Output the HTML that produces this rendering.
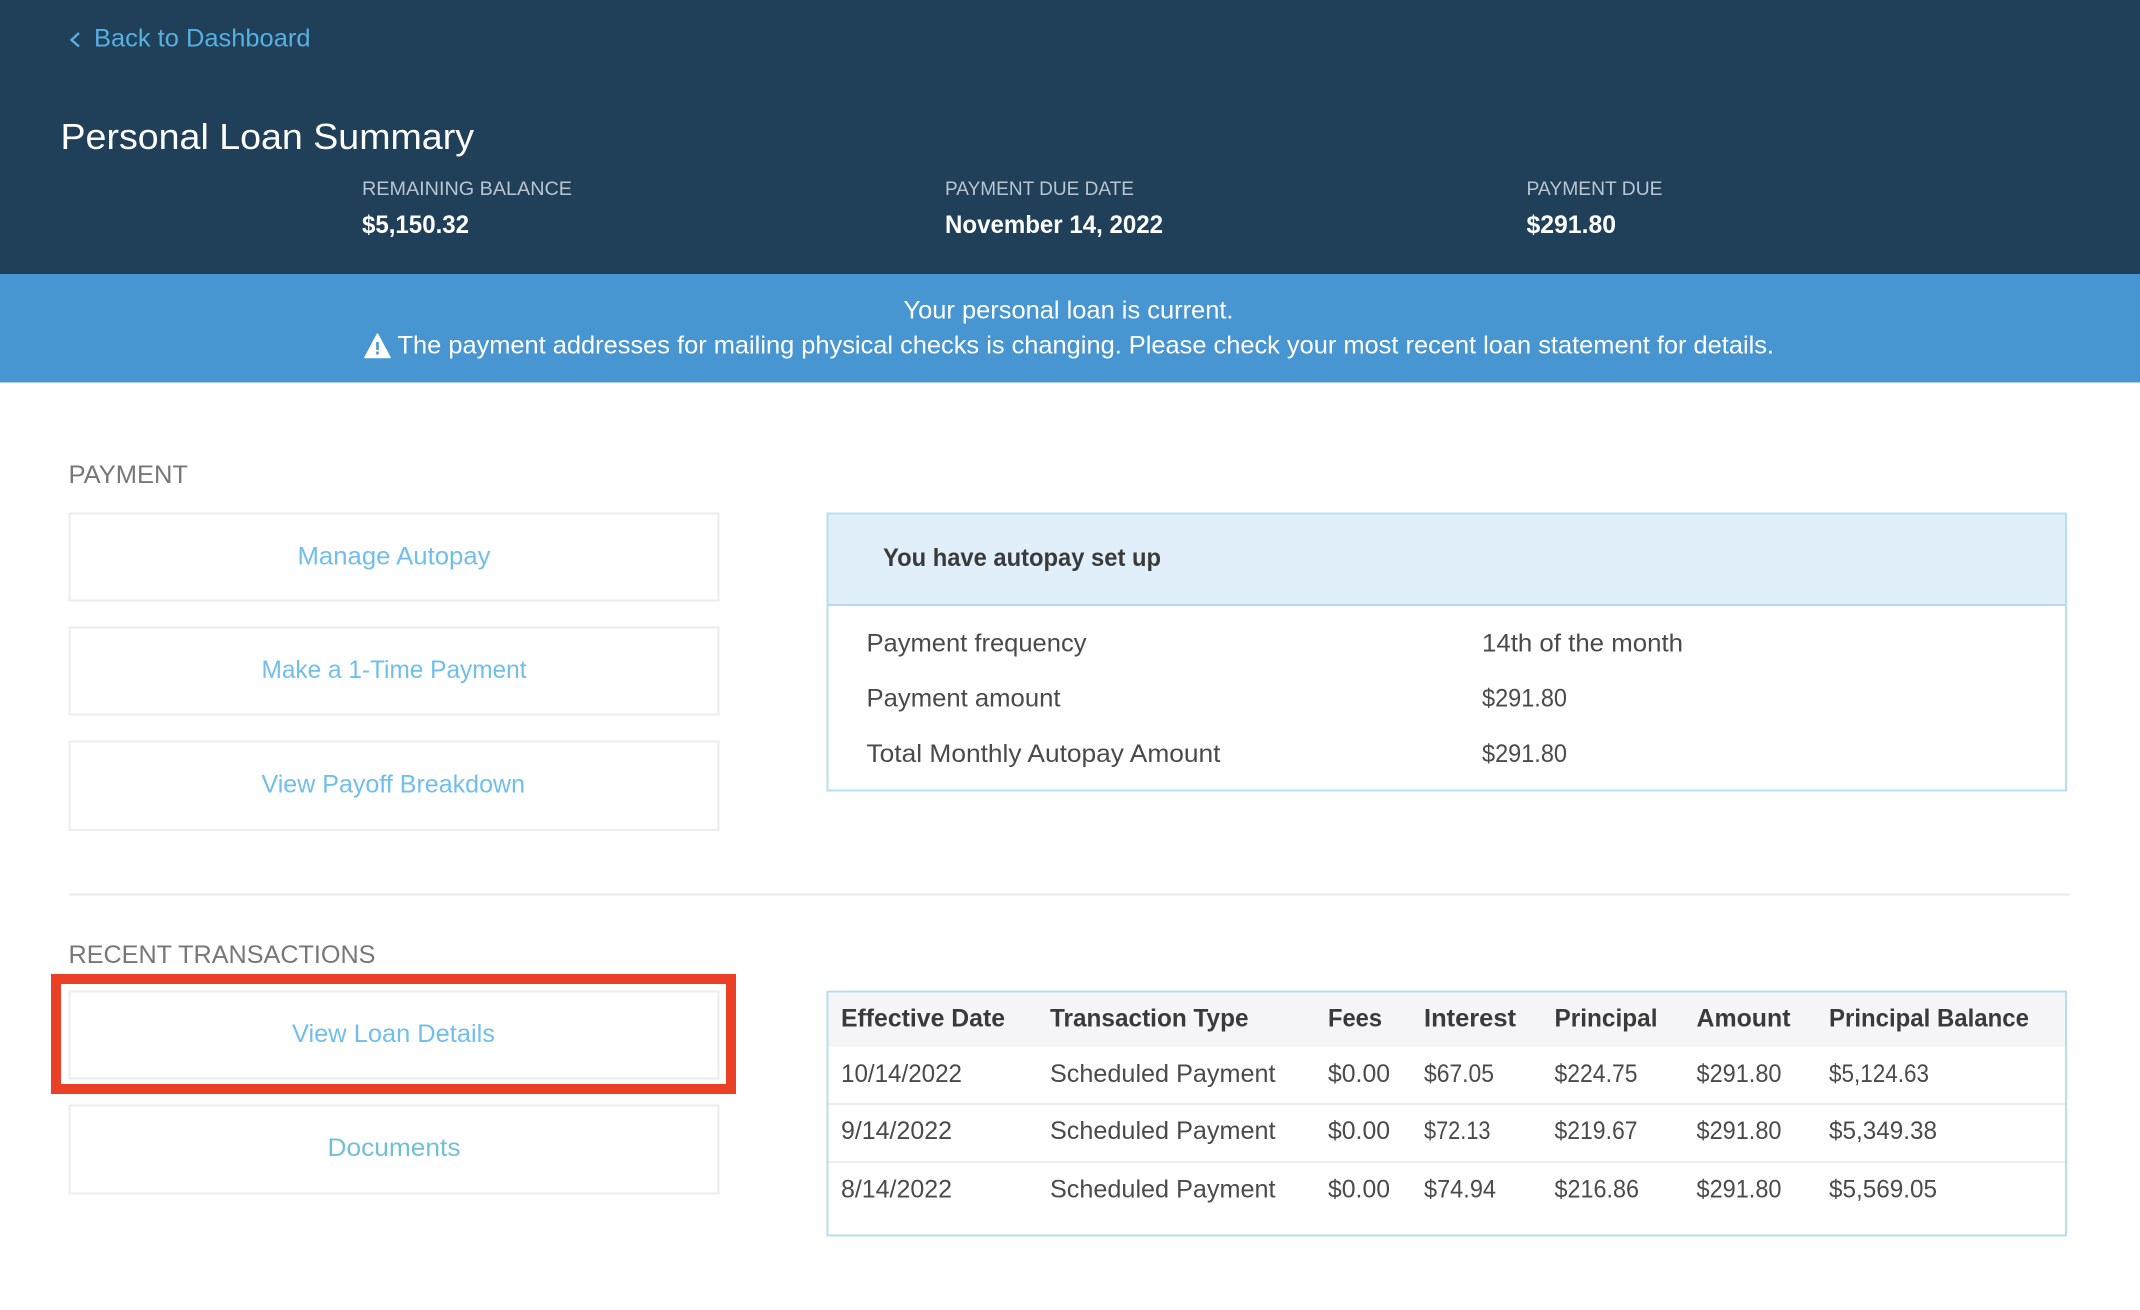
<!DOCTYPE html>
<html><head><meta charset="utf-8"><title>Personal Loan Summary</title>
<style>
html,body{margin:0;padding:0;background:#fff;width:2140px;height:1310px;overflow:hidden}
svg{display:block}
text{font-family:"Liberation Sans",sans-serif;font-size:25px;fill:#4a4a4a}
.b{font-weight:700}
.h{fill:#3a3a3a;font-weight:700}
.l{fill:#6fbfea}
.s{fill:#777}
.w{fill:#fff}
.g{fill:#b9c5cf;font-size:19.5px}
</style></head><body>
<svg width="2140" height="1310" viewBox="0 0 2140 1310" xmlns="http://www.w3.org/2000/svg">
<rect width="2140" height="1310" fill="#fff"/>
<rect width="2140" height="274" fill="#203f58"/>
<rect y="274" width="2140" height="109" fill="#4795d1"/>
<rect y="382" width="2140" height="1" fill="#a9cfea"/>

<path d="M79 33L71.500 40L79 46.500" fill="none" stroke="#56b0e0" stroke-width="2.400"/>
<text x="94" y="46.500" class="l" style="fill:#56b0e0" textLength="216.500" lengthAdjust="spacingAndGlyphs">Back to Dashboard</text>
<text x="60.500" y="149" class="w" style="font-size:36px" textLength="413.500" lengthAdjust="spacingAndGlyphs">Personal Loan Summary</text>

<text x="362" y="195" class="g" textLength="210" lengthAdjust="spacingAndGlyphs">REMAINING BALANCE</text>
<text x="362" y="233" class="w b" textLength="107" lengthAdjust="spacingAndGlyphs">$5,150.32</text>
<text x="945" y="195" class="g" textLength="189" lengthAdjust="spacingAndGlyphs">PAYMENT DUE DATE</text>
<text x="945" y="233" class="w b" textLength="218" lengthAdjust="spacingAndGlyphs">November 14, 2022</text>
<text x="1526.500" y="195" class="g" textLength="136" lengthAdjust="spacingAndGlyphs">PAYMENT DUE</text>
<text x="1526.500" y="233" class="w b" textLength="89.500" lengthAdjust="spacingAndGlyphs">$291.80</text>

<text x="903.500" y="318.500" class="w" textLength="330" lengthAdjust="spacingAndGlyphs">Your personal loan is current.</text>
<path d="M377.500 334L390 357.500H365Z" fill="#fff" stroke="#fff" stroke-width="1.500" stroke-linejoin="round"/>
<rect x="376.200" y="342" width="2.600" height="8" fill="#4795d1"/>
<rect x="376.200" y="351.500" width="2.600" height="3" fill="#4795d1"/>
<text x="397.500" y="353.500" class="w" textLength="1376.500" lengthAdjust="spacingAndGlyphs">The payment addresses for mailing physical checks is changing. Please check your most recent loan statement for details.</text>

<text x="68.500" y="483" class="s" textLength="119.500" lengthAdjust="spacingAndGlyphs">PAYMENT</text>
<g fill="#fff" stroke="#ececec" stroke-width="2">
<rect x="69.500" y="513.500" width="649" height="87"/>
<rect x="69.500" y="627.500" width="649" height="87"/>
<rect x="69.500" y="741.500" width="649" height="88.500"/>
<rect x="69.500" y="991.500" width="649" height="87"/>
<rect x="69.500" y="1105.500" width="649" height="88"/>
</g>
<text x="297.500" y="564.500" class="l" textLength="193" lengthAdjust="spacingAndGlyphs">Manage Autopay</text>
<text x="261.500" y="678" class="l" textLength="265" lengthAdjust="spacingAndGlyphs">Make a 1-Time Payment</text>
<text x="261.500" y="792.500" class="l" textLength="263.500" lengthAdjust="spacingAndGlyphs">View Payoff Breakdown</text>

<rect x="69" y="893.500" width="2001" height="2" fill="#e9e9e9"/>
<text x="68.500" y="963" class="s" textLength="307" lengthAdjust="spacingAndGlyphs">RECENT TRANSACTIONS</text>
<rect x="56" y="979" width="675" height="110" fill="none" stroke="#ea4026" stroke-width="10"/>
<text x="292" y="1042" class="l" textLength="203" lengthAdjust="spacingAndGlyphs">View Loan Details</text>
<text x="327.500" y="1156" class="l" style="fill:#72c0d8" textLength="133" lengthAdjust="spacingAndGlyphs">Documents</text>

<rect x="827.500" y="513.500" width="1238.500" height="92" fill="#e1effb"/>
<rect x="827.500" y="513.500" width="1238.500" height="277" fill="none" stroke="#b5dfee" stroke-width="2"/>
<rect x="827.500" y="604" width="1238.500" height="2" fill="#b5dcee"/>
<text x="883" y="566" class="h" textLength="278" lengthAdjust="spacingAndGlyphs">You have autopay set up</text>
<text x="866.500" y="651.500" textLength="220" lengthAdjust="spacingAndGlyphs">Payment frequency</text>
<text x="1482" y="651.500" textLength="201" lengthAdjust="spacingAndGlyphs">14th of the month</text>
<text x="866.500" y="706.500" textLength="194" lengthAdjust="spacingAndGlyphs">Payment amount</text>
<text x="1482" y="706.500" textLength="85" lengthAdjust="spacingAndGlyphs">$291.80</text>
<text x="866.500" y="762" textLength="354" lengthAdjust="spacingAndGlyphs">Total Monthly Autopay Amount</text>
<text x="1482" y="762" textLength="85" lengthAdjust="spacingAndGlyphs">$291.80</text>

<rect x="827.500" y="991.500" width="1238.500" height="55.500" fill="#f5f5f8"/>
<rect x="827.500" y="1103" width="1238.500" height="2" fill="#ececec"/>
<rect x="827.500" y="1161" width="1238.500" height="2" fill="#ececec"/>
<rect x="827.500" y="991.500" width="1238.500" height="244" fill="none" stroke="#b5dfee" stroke-width="2"/>

<text x="841" y="1026.500" class="h" textLength="164" lengthAdjust="spacingAndGlyphs">Effective Date</text>
<text x="1050" y="1026.500" class="h" textLength="198.500" lengthAdjust="spacingAndGlyphs">Transaction Type</text>
<text x="1328" y="1026.500" class="h" textLength="54" lengthAdjust="spacingAndGlyphs">Fees</text>
<text x="1424" y="1026.500" class="h" textLength="92" lengthAdjust="spacingAndGlyphs">Interest</text>
<text x="1554.500" y="1026.500" class="h" textLength="103" lengthAdjust="spacingAndGlyphs">Principal</text>
<text x="1696.500" y="1026.500" class="h" textLength="94" lengthAdjust="spacingAndGlyphs">Amount</text>
<text x="1829" y="1026.500" class="h" textLength="200" lengthAdjust="spacingAndGlyphs">Principal Balance</text>

<text x="841" y="1082" textLength="121" lengthAdjust="spacingAndGlyphs">10/14/2022</text>
<text x="1050" y="1082" textLength="225.500" lengthAdjust="spacingAndGlyphs">Scheduled Payment</text>
<text x="1328" y="1082" textLength="62" lengthAdjust="spacingAndGlyphs">$0.00</text>
<text x="1424" y="1082" textLength="70" lengthAdjust="spacingAndGlyphs">$67.05</text>
<text x="1554.500" y="1082" textLength="83" lengthAdjust="spacingAndGlyphs">$224.75</text>
<text x="1696.500" y="1082" textLength="85" lengthAdjust="spacingAndGlyphs">$291.80</text>
<text x="1829" y="1082" textLength="100" lengthAdjust="spacingAndGlyphs">$5,124.63</text>

<text x="841" y="1139" textLength="111" lengthAdjust="spacingAndGlyphs">9/14/2022</text>
<text x="1050" y="1139" textLength="225.500" lengthAdjust="spacingAndGlyphs">Scheduled Payment</text>
<text x="1328" y="1139" textLength="62" lengthAdjust="spacingAndGlyphs">$0.00</text>
<text x="1424" y="1139" textLength="66.500" lengthAdjust="spacingAndGlyphs">$72.13</text>
<text x="1554.500" y="1139" textLength="83" lengthAdjust="spacingAndGlyphs">$219.67</text>
<text x="1696.500" y="1139" textLength="85" lengthAdjust="spacingAndGlyphs">$291.80</text>
<text x="1829" y="1139" textLength="108" lengthAdjust="spacingAndGlyphs">$5,349.38</text>

<text x="841" y="1197.500" textLength="111" lengthAdjust="spacingAndGlyphs">8/14/2022</text>
<text x="1050" y="1197.500" textLength="225.500" lengthAdjust="spacingAndGlyphs">Scheduled Payment</text>
<text x="1328" y="1197.500" textLength="62" lengthAdjust="spacingAndGlyphs">$0.00</text>
<text x="1424" y="1197.500" textLength="72" lengthAdjust="spacingAndGlyphs">$74.94</text>
<text x="1554.500" y="1197.500" textLength="84.500" lengthAdjust="spacingAndGlyphs">$216.86</text>
<text x="1696.500" y="1197.500" textLength="85" lengthAdjust="spacingAndGlyphs">$291.80</text>
<text x="1829" y="1197.500" textLength="108" lengthAdjust="spacingAndGlyphs">$5,569.05</text>
</svg>
</body></html>
